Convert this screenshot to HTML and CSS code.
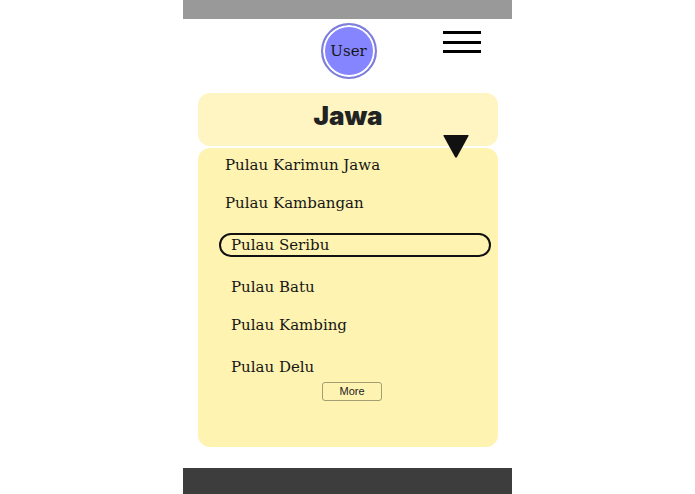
FILE: index.html
```
<!DOCTYPE html>
<html lang="id">

<head>
    <meta charset="UTF-8">
    <meta name="viewport" content="width=device-width, initial-scale=1.0">
    <title>Jawa</title>
    <link rel="stylesheet" href="styles.css">
</head>

<body>
    <div class="phone">
        <div class="topbar"></div>

        <header class="header">
            <a class="user" href="#">User</a>
            <button class="menu" type="button" aria-label="Menu">
                <span></span>
                <span></span>
                <span></span>
            </button>
        </header>

        <main>
            <div class="region">
                <h1>Jawa</h1>
                <button class="arrow" type="button" aria-label="Pilih">
                    <svg width="26" height="23" viewBox="0 0 26 23">
                        <path d="M1 0H25Q26 0 25.500 1L14 22Q13 23.500 12 22L0.500 1Q0 0 1 0Z" fill="#111" />
                    </svg>
                </button>
            </div>

            <div class="islands">
                <ul>
                    <li><a href="#">Pulau Karimun Jawa</a></li>
                    <li class="far"><a href="#">Pulau Kambangan</a></li>
                    <li class="far"><a class="indent selected" href="#">Pulau Seribu</a></li>
                    <li><a class="indent" href="#">Pulau Batu</a></li>
                    <li class="far"><a class="indent" href="#">Pulau Kambing</a></li>
                    <li class="last"><a class="indent" href="#">Pulau Delu</a></li>
                </ul>
                <button class="more" type="button">More</button>
            </div>
        </main>

        <footer class="footer"></footer>
    </div>
</body>

</html>
```

FILE: styles.css
```
* {
    box-sizing: border-box;
    margin: 0;
    padding: 0;
}

body {
    background-color: white;
    font-family: 'DejaVu Serif', serif;
    font-size: 15px;
    color: #161616;
}

a {
    color: inherit;
    text-decoration: none;
}

button {
    border: none;
    background: none;
    cursor: pointer;
}

.phone {
    display: flex;
    flex-direction: column;
    width: 100%;
    max-width: 329px;
    min-height: 100vh;
    margin: 0 auto;
}

.topbar {
    height: 19px;
    background-color: #999999;
}

.header {
    display: grid;
    grid-template-columns: 1fr auto 1fr;
    padding: 4px 31px 14px 33px;
}

.user {
    grid-column: 2;
    display: flex;
    justify-content: center;
    align-items: center;
    width: 56px;
    height: 56px;
    border: 2px solid #7f7fdb;
    border-radius: 50%;
    background-color: #8585ff;
    box-shadow: inset 0 0 0 2px white;
}

.menu {
    justify-self: end;
    align-self: start;
    display: flex;
    flex-direction: column;
    justify-content: space-between;
    width: 38px;
    height: 22px;
    margin-top: 8px;
}

.menu span {
    height: 3px;
    background-color: black;
}

main {
    display: flex;
    flex-direction: column;
    gap: 2px;
    padding: 0 14px 21px 15px;
}

.region {
    position: relative;
    padding: 5px 0 12px;
    border-radius: 12px;
    background-color: #fff5c2;
    text-align: center;
}

h1 {
    font-family: Inter, sans-serif;
    font-size: 26px;
    font-weight: 900;
    line-height: 36px;
    color: #222222;
}

/* hangs over the edge between the two cards */
.arrow {
    position: absolute;
    right: 29px;
    bottom: -12px;
}

.arrow svg {
    display: block;
}

.islands {
    display: flex;
    flex-direction: column;
    padding: 5px 7px 46px 21px;
    border-radius: 12px;
    background-color: #fef3b1;
}

ul {
    width: 100%;
    list-style: none;
}

li {
    margin-bottom: 14px;
}

li.far {
    margin-bottom: 18px;
}

li.last {
    margin-bottom: 3px;
}

li a {
    display: flex;
    align-items: center;
    height: 24px;
    padding-left: 6px;
    line-height: 24px;
}

li a.indent {
    padding-left: 12px;
}

li a.selected {
    padding-left: 10px;
    border: 2px solid #111111;
    border-radius: 12px;
}

.more {
    align-self: center;
    width: 60px;
    height: 19px;
    margin-right: 6px;
    border: 1px solid #a39d73;
    border-radius: 3px;
    font-family: 'Liberation Sans', sans-serif;
    font-size: 11px;
    line-height: 17px;
    color: #222222;
}

.footer {
    flex: 1;
    min-height: 26px;
    background-color: #3d3d3d;
}
```
